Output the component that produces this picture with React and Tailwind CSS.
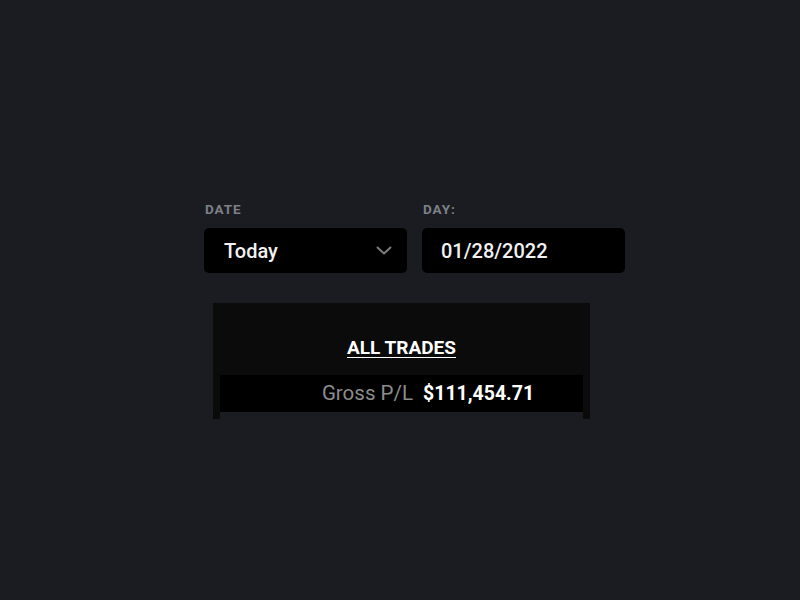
import React from "react";

const labelClass = "text-[13.5px] leading-4 font-bold tracking-[0.07em] text-[#7d8088] uppercase";
const boxClass = "h-[45px] w-[203px] rounded-[5px] bg-black flex items-center text-[20px] font-medium text-[#f2f2f2]";

const Chevron = () => (
    <svg width="16" height="9" viewBox="0 0 16 9" fill="none">
        <path d="M1.5 1.5 L8 7.5 L14.5 1.5" stroke="#7c7c7c" strokeWidth="2" strokeLinecap="round" strokeLinejoin="round" />
    </svg>
);

const App = () => {
    return (
        <div className="w-[800px] h-[600px] bg-[#1b1c21] pt-[201px] font-['Roboto',sans-serif]">
            <div className="ml-[204px] flex gap-[15px]">
                <div className="flex flex-col">
                    <span className={`${labelClass} pl-[1px]`}>Date</span>
                    <div className={`${boxClass} mt-[11px] pl-[20px] pr-[15px] justify-between`}>
                        <span>Today</span>
                        <Chevron />
                    </div>
                </div>
                <div className="flex flex-col">
                    <span className={`${labelClass} pl-[1px]`}>Day:</span>
                    <div className={`${boxClass} mt-[11px] pl-[19px]`}>
                        <span>01/28/2022</span>
                    </div>
                </div>
            </div>

            {/* trades table */}
            <div className="ml-[213px] mt-[30px] w-[377px] flex flex-col">
                <div className="bg-[#0b0b0b] px-[7px] pt-[33px] flex flex-col">
                    <div className="text-center">
                        <span className="text-[19px] leading-6 font-bold text-white underline underline-offset-[3px]">ALL TRADES</span>
                    </div>
                    <div className="mt-[14px] h-[37px] bg-black flex items-center">
                        <span className="w-[193px] text-right text-[20.5px] text-[#8d8d8d]">Gross P/L</span>
                        <span className="ml-[10px] text-[19.5px] font-bold text-white">$111,454.71</span>
                    </div>
                </div>
                <div className="flex h-[7px]">
                    <div className="w-[7px] bg-[#0a0a0a]" />
                    <div className="flex-1" />
                    <div className="w-[7px] bg-[#0a0a0a]" />
                </div>
            </div>
        </div>
    );
};

export default App;
